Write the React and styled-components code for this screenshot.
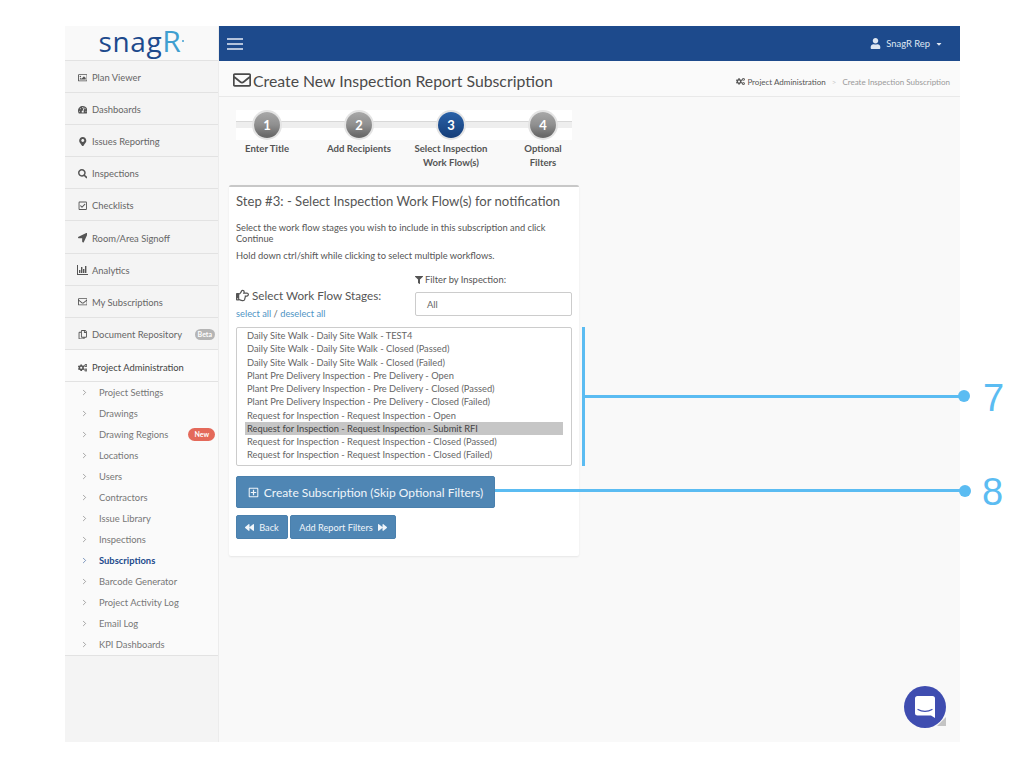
import React from 'react';
import styled, { createGlobalStyle } from 'styled-components';
import {
  FaRegImage, FaTachometerAlt, FaMapMarkerAlt, FaSearch, FaRegCheckSquare, FaLocationArrow,
  FaRegEnvelope, FaRegCopy, FaCogs, FaRegHandPointRight, FaFilter, FaRegPlusSquare,
  FaBackward, FaForward, FaUser, FaCaretDown,
} from 'react-icons/fa';
import { ChevronRight } from 'lucide-react';

const Global = createGlobalStyle`
  html, body { margin: 0; padding: 0; background: #fff; }
  body { font-family: Lato, 'Noto Sans', sans-serif; color: #555; width: 1024px; height: 768px; overflow: hidden; }
`;

const Page = styled.div`
  position: relative;
  width: 1024px;
  height: 768px;
  padding: 26px 64px 26px 65px;
  box-sizing: border-box;
`;

const Shell = styled.div`
  display: flex;
  height: 716px;
  background: #f9f9f9;
`;

const Sidebar = styled.aside`
  width: 154px;
  flex: none;
  background: #f4f4f4;
  border-right: 1px solid #ececec;
  box-sizing: border-box;
`;

const Logo = styled.div`
  height: 35px;
  box-sizing: border-box;
  background: #f9f9f9;
  border-bottom: 1px solid #e2e2e2;
  display: flex;
  align-items: center;
  justify-content: center;
  font-family: 'Open Sans', sans-serif;
  font-size: 28px;
  letter-spacing: 0.6px;
  color: #1d4a8c;
  line-height: 1;
  padding-bottom: 5px;
  span { color: #3f9fd0; font-size: 30px; }
  i { width: 2px; height: 2px; background: #3f9fd0; border-radius: 50%; margin: 0 0 0 1px; }
`;

const NavItem = styled.div`
  height: 32.1px;
  box-sizing: border-box;
  border-bottom: 1px solid #e2e2e2;
  display: flex;
  align-items: center;
  padding: ${p => (p.$dark ? '4px' : '2px')} 0 0 11px;
  font-size: 9.4px;
  color: ${p => (p.$dark ? '#444' : '#666')};
  background: ${p => (p.$dark ? '#fafafa' : 'transparent')};
`;

const NavIcon = styled.span`
  width: 13px;
  display: flex;
  justify-content: center;
  font-size: 9.5px;
  color: #555;
  margin-right: 3px;
`;

const Pill = styled.span`
  margin-left: auto;
  margin-right: 3px;
  font-size: 7px;
  font-weight: 700;
  line-height: 11px;
  padding: ${p => (p.$new ? '1px 6px' : '0 3px')};
  border-radius: 7px;
  color: #fff;
  background: ${p => (p.$new ? '#e4695a' : '#b5b5b5')};
`;

const SubList = styled.div`
  background: #fafafa;
  border-bottom: 1px solid #e2e2e2;
`;

const SubItem = styled.div`
  height: 21px;
  box-sizing: border-box;
  display: flex;
  align-items: center;
  padding-left: 15px;
  font-size: 9.4px;
  color: ${p => (p.$active ? '#1d4a8c' : '#777')};
  font-weight: ${p => (p.$active ? 700 : 400)};
  svg { margin-right: 10px; color: ${p => (p.$active ? '#1d4a8c' : '#666')}; }
`;

const Main = styled.main`
  flex: 1;
  display: flex;
  flex-direction: column;
  min-width: 0;
`;

const TopBar = styled.header`
  height: 35px;
  flex: none;
  background: #1d4a8c;
  color: #fff;
  display: flex;
  align-items: center;
  justify-content: space-between;
  padding: 0 17px 0 8px;
`;

const UserMenu = styled.div`
  display: flex;
  align-items: center;
  gap: 5px;
  font-size: 9.4px;
  color: #dfe7f2;
`;

const TitleBar = styled.div`
  height: 36px;
  flex: none;
  background: #fafafa;
  border-bottom: 1px solid #e9e9e9;
  box-sizing: border-box;
  display: flex;
  align-items: center;
  justify-content: space-between;
  padding: 3px 10px 0 14px;
`;

const PageTitle = styled.h1`
  margin: 0;
  font-size: 15.8px;
  font-weight: 400;
  color: #4a4a4a;
  display: flex;
  align-items: center;
  gap: 2px;
`;

const Crumbs = styled.div`
  display: flex;
  align-items: center;
  font-size: 8px;
  color: #999;
  padding-top: 3px;
  b { font-weight: 400; color: #555; display: flex; align-items: center; gap: 2px; }
  em { font-style: normal; color: #ccc; margin: 0 6px; }
`;

const Content = styled.div`
  padding: 13px 0 0 10px;
`;

const Stepper = styled.div`
  width: 368px;
  margin-left: -8px;
  display: grid;
  grid-template-columns: repeat(4, 92px);
  position: relative;
`;

const StepTrack = styled.div`
  position: absolute;
  top: 0;
  left: 15px;
  right: 17px;
  height: 30px;
  background: #fff;
  &::after {
    content: '';
    position: absolute;
    left: 0;
    right: 0;
    top: 11px;
    height: 7px;
    background: #eee;
    border-top: 1px solid #d8d8d8;
    box-sizing: border-box;
  }
`;

const Step = styled.div`
  display: flex;
  flex-direction: column;
  align-items: center;
  position: relative;
`;

const StepCircle = styled.div`
  width: 26px;
  height: 26px;
  margin-top: 2px;
  border-radius: 50%;
  box-shadow: 0 0 0 2px #e4e4e4;
  background: ${p => (p.$active
    ? 'linear-gradient(#2a62a8, #153d78)'
    : 'linear-gradient(#a8a8a8, #8f8f8f 50%, #6a6a6a 90%)')};
  color: #fff;
  font-size: 13px;
  font-weight: 700;
  display: flex;
  align-items: center;
  justify-content: center;
`;

const StepLabel = styled.div`
  margin-top: 4px;
  font-size: 9.6px;
  font-weight: 700;
  line-height: 14px;
  color: #555;
  text-align: center;
  white-space: pre-line;
`;

const Card = styled.section`
  margin-top: 15px;
  width: 350px;
  height: 371px;
  box-sizing: border-box;
  background: #fff;
  border-top: 2px solid #c8c8c8;
  border-radius: 2px;
  box-shadow: 0 1px 2px rgba(0, 0, 0, 0.08);
  padding: 5px 7px 7px;
`;

const CardTitle = styled.h2`
  margin: 0;
  font-size: 13.1px;
  font-weight: 400;
  color: #555;
  line-height: 18px;
  white-space: nowrap;
`;

const Para = styled.p`
  margin: ${p => p.$mt || 0}px 0 0;
  font-size: 9.3px;
  line-height: 11px;
  color: #555;
`;

const ChooserRow = styled.div`
  display: flex;
  justify-content: space-between;
  align-items: flex-end;
  margin-top: 13px;
  margin-bottom: 7px;
`;

const StagesHead = styled.div`
  font-size: 11.7px;
  color: #555;
  display: flex;
  align-items: center;
  gap: 3px;
  line-height: 16px;
`;

const Links = styled.div`
  font-size: 9.3px;
  color: #666;
  margin-top: 5px;
  line-height: 12px;
  a { color: #4f94c4; }
`;

const FilterCol = styled.div`
  width: 157px;
  padding-bottom: 4px;
`;

const FilterLabel = styled.div`
  font-size: 9.4px;
  color: #555;
  display: flex;
  align-items: center;
  gap: 2px;
  margin-bottom: 6px;
  line-height: 12px;
`;

const FilterBox = styled.div`
  height: 24px;
  box-sizing: border-box;
  border: 1px solid #ccc;
  border-radius: 2px;
  padding-left: 11px;
  display: flex;
  align-items: center;
  font-size: 9.4px;
  color: #666;
`;

const ListBox = styled.div`
  height: 139px;
  box-sizing: border-box;
  border: 1px solid #ccc;
  border-radius: 2px;
  padding: 1px 8px;
`;

const ListRow = styled.div`
  height: 13.25px;
  line-height: 13.25px;
  font-size: 9.3px;
  padding-left: 2px;
  color: ${p => (p.$selected ? '#444' : '#666')};
  background: ${p => (p.$selected ? '#c6c6c6' : 'transparent')};
  white-space: nowrap;
`;

const Button = styled.button`
  border: 1px solid #4a80ad;
  border-radius: 2px;
  background: #4f86b4;
  color: #f0f5fa;
  font-family: inherit;
  font-size: ${p => (p.$big ? '12px' : '9.2px')};
  height: ${p => (p.$big ? '32px' : '24px')};
  width: ${p => p.$w}px;
  padding: 0;
  display: flex;
  align-items: center;
  justify-content: center;
  gap: 5px;
`;

const BigRow = styled.div`
  margin-top: 10px;
`;

const BtnRow = styled.div`
  display: flex;
  gap: 2px;
  margin-top: 7px;
`;

const ChatTail = styled.div`
  position: absolute;
  left: 937px;
  top: 717px;
  border-style: solid;
  border-width: 0 0 9px 9px;
  border-color: transparent transparent #c4c4c4 transparent;
`;

const Chat = styled.div`
  position: absolute;
  left: 904px;
  top: 686px;
  width: 42px;
  height: 42px;
  border-radius: 50%;
  background: #3f4db0;
  display: flex;
  align-items: center;
  justify-content: center;
`;

const Callout = styled.div`
  position: absolute;
  background: #5bbcf2;
`;

const CalloutDot = styled.div`
  position: absolute;
  width: 12px;
  height: 12px;
  border-radius: 50%;
  background: #5bbcf2;
`;

const CalloutNum = styled.div`
  position: absolute;
  font-family: 'Liberation Sans', Arial, sans-serif;
  font-size: 38px;
  line-height: 38px;
  color: #5bbcf2;
`;

const ChartIcon = () => (
  <svg width="11" height="10" viewBox="0 0 11 10" fill="currentColor">
    <path d="M0 0h1v9h10v1H0z" />
    <path d="M2 5h1.4v3H2zM4 2h1.4v6H4zM6 4h1.4v4H6zM8 1h1.4v7H8z" />
  </svg>
);

const MenuIcon = () => (
  <svg width="16" height="12" viewBox="0 0 16 12" stroke="#e6ecf5" strokeWidth="1.3">
    <path d="M0 1h16M0 6h16M0 11h16" />
  </svg>
);

const nav = [
  [FaRegImage, 'Plan Viewer'],
  [FaTachometerAlt, 'Dashboards'],
  [FaMapMarkerAlt, 'Issues Reporting'],
  [FaSearch, 'Inspections'],
  [FaRegCheckSquare, 'Checklists'],
  [FaLocationArrow, 'Room/Area Signoff'],
  [ChartIcon, 'Analytics'],
  [FaRegEnvelope, 'My Subscriptions'],
];

const subs = ['Project Settings', 'Drawings', 'Drawing Regions', 'Locations', 'Users', 'Contractors', 'Issue Library',
  'Inspections', 'Subscriptions', 'Barcode Generator', 'Project Activity Log', 'Email Log', 'KPI Dashboards'];

const steps = [['1', 'Enter Title'], ['2', 'Add Recipients'], ['3', 'Select Inspection\nWork Flow(s)'], ['4', 'Optional\nFilters']];

const flows = [
  'Daily Site Walk - Daily Site Walk - TEST4',
  'Daily Site Walk - Daily Site Walk - Closed (Passed)',
  'Daily Site Walk - Daily Site Walk - Closed (Failed)',
  'Plant Pre Delivery Inspection - Pre Delivery - Open',
  'Plant Pre Delivery Inspection - Pre Delivery - Closed (Passed)',
  'Plant Pre Delivery Inspection - Pre Delivery - Closed (Failed)',
  'Request for Inspection - Request Inspection - Open',
  'Request for Inspection - Request Inspection - Submit RFI',
  'Request for Inspection - Request Inspection - Closed (Passed)',
  'Request for Inspection - Request Inspection - Closed (Failed)',
];

export default function App() {
  return (
    <Page>
      <Global />
      <Shell>
        <Sidebar>
          <Logo>snag<span>R</span><i /></Logo>
          {nav.map(([Icon, label]) => (
            <NavItem key={label}><NavIcon><Icon /></NavIcon>{label}</NavItem>
          ))}
          <NavItem><NavIcon><FaRegCopy /></NavIcon>Document Repository<Pill>Beta</Pill></NavItem>
          <NavItem $dark><NavIcon><FaCogs /></NavIcon>Project Administration</NavItem>
          <SubList>
            {subs.map(s => (
              <SubItem key={s} $active={s === 'Subscriptions'}>
                <ChevronRight size={9} strokeWidth={1.5} />
                {s}
                {s === 'Drawing Regions' && <Pill $new>New</Pill>}
              </SubItem>
            ))}
          </SubList>
        </Sidebar>
        <Main>
          <TopBar>
            <MenuIcon />
            <UserMenu><FaUser size={11} /> SnagR Rep <FaCaretDown size={8} /></UserMenu>
          </TopBar>
          <TitleBar>
            <PageTitle><FaRegEnvelope size={18} />Create New Inspection Report Subscription</PageTitle>
            <Crumbs><b><FaCogs size={9} />Project Administration</b><em>&gt;</em>Create Inspection Subscription</Crumbs>
          </TitleBar>
          <Content>
            <Stepper>
              <StepTrack />
              {steps.map(([n, label]) => (
                <Step key={n}>
                  <StepCircle $active={n === '3'}>{n}</StepCircle>
                  <StepLabel>{label}</StepLabel>
                </Step>
              ))}
            </Stepper>
            <Card>
              <CardTitle>Step #3: - Select Inspection Work Flow(s) for notification</CardTitle>
              <Para $mt={12}>Select the work flow stages you wish to include in this subscription and click Continue</Para>
              <Para $mt={6}>Hold down ctrl/shift while clicking to select multiple workflows.</Para>
              <ChooserRow>
                <div>
                  <StagesHead><FaRegHandPointRight size={13} />Select Work Flow Stages:</StagesHead>
                  <Links><a>select all</a> / <a>deselect all</a></Links>
                </div>
                <FilterCol>
                  <FilterLabel><FaFilter size={8} />Filter by Inspection:</FilterLabel>
                  <FilterBox>All</FilterBox>
                </FilterCol>
              </ChooserRow>
              <ListBox>
                {flows.map(f => (
                  <ListRow key={f} $selected={f.endsWith('Submit RFI')}>{f}</ListRow>
                ))}
              </ListBox>
              <BigRow>
                <Button $big $w={259}><FaRegPlusSquare size={11} />Create Subscription (Skip Optional Filters)</Button>
              </BigRow>
              <BtnRow>
                <Button $w={52}><FaBackward size={9} />Back</Button>
                <Button $w={106}>Add Report Filters<FaForward size={9} /></Button>
              </BtnRow>
            </Card>
          </Content>
        </Main>
      </Shell>
      <ChatTail />
      <Chat>
        <svg width="20" height="22" viewBox="0 0 20 22">
          <path d="M2.5 0h15A2.5 2.5 0 0 1 20 2.5V22l-4-2.5H2.5A2.5 2.5 0 0 1 0 17V2.5A2.5 2.5 0 0 1 2.5 0z" fill="#fff" />
          <path d="M3 13.5c4 2.4 10 2.4 14 0" fill="none" stroke="#3f4db0" strokeWidth="1.2" strokeLinecap="round" />
        </svg>
      </Chat>
      <Callout style={{ left: 582, top: 327, width: 3, height: 139 }} />
      <Callout style={{ left: 585, top: 395, width: 379, height: 3 }} />
      <CalloutDot style={{ left: 958, top: 390 }} />
      <CalloutNum style={{ left: 983, top: 379 }}>7</CalloutNum>
      <Callout style={{ left: 495, top: 489, width: 469, height: 3 }} />
      <CalloutDot style={{ left: 959, top: 485 }} />
      <CalloutNum style={{ left: 982, top: 473 }}>8</CalloutNum>
    </Page>
  );
}
